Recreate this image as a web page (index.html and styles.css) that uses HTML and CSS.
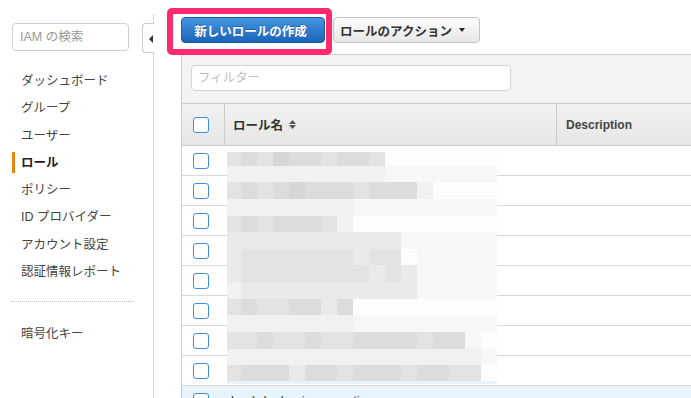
FILE: index.html
```
<!DOCTYPE html>
<html lang="ja">
<head>
<meta charset="utf-8">
<title>IAM ロール</title>
<link rel="stylesheet" href="styles.css">
</head>
<body>
<div class="app">
  <aside class="sidebar">
    <div class="search">IAM の検索</div>
    <nav class="nav">
      <a class="item">ダッシュボード</a>
      <a class="item">グループ</a>
      <a class="item">ユーザー</a>
      <a class="item active">ロール</a>
      <a class="item">ポリシー</a>
      <a class="item">ID プロバイダー</a>
      <a class="item">アカウント設定</a>
      <a class="item">認証情報レポート</a>
    </nav>
    <div class="sep"></div>
    <nav class="nav nav2">
      <a class="item">暗号化キー</a>
    </nav>
    <div class="collapse"></div>
  </aside>
  <main class="main">
    <div class="toolbar">
      <button class="btn primary">新しいロールの作成</button>
      <button class="btn secondary"><span>ロールのアクション</span><span class="caret"></span></button>
      <div class="highlight"></div>
    </div>
    <div class="panel">
      <div class="filterbar"><div class="filter">フィルター</div></div>
      <div class="head">
        <div class="c-cb hb"><span class="cb"></span></div>
        <div class="c-name hb">ロール名
          <svg class="sort" width="7" height="9" viewBox="0 0 7 9"><path d="M0 4 L3.5 0 L7 4 Z M0 5 L7 5 L3.5 9 Z" fill="#555"/></svg>
        </div>
        <div class="c-desc hd">Description</div>
      </div>
      <div class="row"><div class="c-cb"><span class="cb"></span></div><div class="c-name"></div><div class="c-desc"></div></div>
      <div class="row"><div class="c-cb"><span class="cb"></span></div><div class="c-name"></div><div class="c-desc"></div></div>
      <div class="row"><div class="c-cb"><span class="cb"></span></div><div class="c-name"></div><div class="c-desc"></div></div>
      <div class="row"><div class="c-cb"><span class="cb"></span></div><div class="c-name"></div><div class="c-desc"></div></div>
      <div class="row"><div class="c-cb"><span class="cb"></span></div><div class="c-name"></div><div class="c-desc"></div></div>
      <div class="row"><div class="c-cb"><span class="cb"></span></div><div class="c-name"></div><div class="c-desc"></div></div>
      <div class="row"><div class="c-cb"><span class="cb"></span></div><div class="c-name"></div><div class="c-desc"></div></div>
      <div class="row"><div class="c-cb"><span class="cb"></span></div><div class="c-name"></div><div class="c-desc"></div></div>
      <div class="row sel"><div class="c-cb"><span class="cb"></span></div><div class="c-name name-text">lambda_basic_execution</div><div class="c-desc"></div></div>
      <div class="blur" id="blur"></div>
    </div>
  </main>
</div>
<script src="script.js"></script>
</body>
</html>
```
FILE: styles.css
```
* { box-sizing: border-box; }
html, body { margin: 0; height: 100%; overflow: hidden; background: #fff; }
body {
  font-family: "Liberation Sans", "Noto Sans CJK JP", sans-serif;
  font-size: 12.5px;
  color: #333;
}
.app { display: flex; height: 398px; }

.sidebar {
  width: 154px;
  flex: none;
  margin-top: 14px;
  padding-top: 9px;
  border-right: 1px solid #d5d5d5;
  position: relative;
}
.search {
  margin-left: 12px;
  width: 117px;
  height: 28px;
  border: 1px solid #cfcfcf;
  border-radius: 4px;
  padding-left: 7px;
  line-height: 26px;
  color: #9a9a9a;
}
.nav { margin-top: 17px; }
.nav2 { margin-top: 19px; }
.item {
  display: block;
  height: 27.3px;
  line-height: 27.3px;
  padding-left: 21px;
  color: #444;
  position: relative;
}
.item.active { font-weight: bold; color: #222; }
.item.active::before {
  content: "";
  position: absolute;
  left: 12px;
  top: 2px;
  bottom: 4px;
  width: 3px;
  background: #e8850e;
}
.sep {
  margin: 14.5px 0 0 12px;
  width: 121px;
  border-top: 1px dotted #bdbdbd;
}
.collapse {
  position: absolute;
  right: -1px;
  top: 9px;
  width: 12px;
  height: 30px;
  border: 1px solid #ccc;
  border-right: none;
  border-radius: 4px 0 0 4px;
  background: #fff;
}
.collapse::after {
  content: "";
  position: absolute;
  left: 6px;
  top: 11px;
  border-right: 4px solid #333;
  border-top: 4px solid transparent;
  border-bottom: 4px solid transparent;
}

.main {
  flex: 1;
  min-width: 0;
  padding-left: 27px;
  display: flex;
  flex-direction: column;
}
.toolbar {
  height: 54px;
  flex: none;
  padding-top: 17px;
  display: flex;
  align-items: flex-start;
  gap: 8px;
  position: relative;
  z-index: 2;
}
.btn {
  height: 26px;
  border-radius: 4px;
  font-family: "Liberation Sans", "Noto Sans CJK JP", sans-serif;
  font-weight: bold;
  font-size: 12.5px;
  padding: 0;
  margin: 0;
}
.primary {
  width: 144px;
  padding-right: 5px;
  color: #fff;
  border: 1px solid #1a5aa8;
  background: linear-gradient(#4596e0, #1b63b8);
  text-shadow: 0 -1px 0 rgba(0,0,0,0.25);
}
.secondary {
  width: 147px;
  color: #333;
  border: 1px solid #c4c4c4;
  background: linear-gradient(#fefefe, #e7e7e7);
  display: flex;
  align-items: center;
  padding-left: 6px;
  gap: 7px;
}
.caret {
  width: 0;
  height: 0;
  border-left: 3px solid transparent;
  border-right: 3px solid transparent;
  border-top: 4px solid #222;
}
.highlight {
  position: absolute;
  left: -14px;
  top: 8px;
  width: 165px;
  height: 47px;
  border: 6px solid #fc2b6f;
  border-radius: 5px;
  pointer-events: none;
}

.panel {
  flex: 1;
  border-left: 1px solid #cccccc;
  border-top: 1px solid #cccccc;
  position: relative;
}
.filterbar {
  background: #f3f3f3;
  padding: 10px 0 12px 9px;
}
.filter {
  width: 320px;
  height: 26px;
  border: 1px solid #d3d3d3;
  border-radius: 4px;
  background: #fff;
  color: #c0c0c0;
  padding-left: 6px;
  line-height: 24px;
}
.head {
  display: flex;
  height: 43px;
  border-top: 1px solid #cccccc;
  border-bottom: 1px solid #cccccc;
  background: linear-gradient(#f2f2f2, #e6e6e6);
}
.c-cb {
  width: 43px;
  flex: none;
  padding-left: 11px;
  display: flex;
  align-items: center;
}
.c-name {
  width: 332px;
  flex: none;
  display: flex;
  align-items: center;
  padding-left: 8px;
}
.c-desc {
  flex: 1;
  display: flex;
  align-items: center;
  padding-left: 9px;
}
.head .c-cb, .head .c-name { border-right: 1px solid #cccccc; }
.hb { font-weight: bold; color: #333; }
.hd { font-weight: bold; font-size: 12px; color: #444; }
.sort { margin-left: 6px; }
.cb {
  width: 16px;
  height: 16px;
  border: 1.5px solid #3d8ee0;
  border-radius: 3px;
  background: #fff;
}
.row {
  display: flex;
  height: 30px;
  border-bottom: 1px solid #d8d8d8;
  background: #fff;
}
.row.sel { background: #e7f3fd; }
.name-text { padding-left: 6px; font-size: 13px; color: #333; }

.blur {
  position: absolute;
  left: 45px;
  top: 97px;
  display: flex;
  flex-direction: column;
}
.blur-row { display: flex; }
.blur-cell { width: 16px; flex: none; }
.blur-cell:first-child { width: 14px; }
```
FILE: script.js
```
(function () {
  var rows = [
    [14, "45465545540000000"],
    [16, "22222222221111111"],
    [17, "45456555455520000"],
    [17, "22222222111111111"],
    [16, "45455542000000000"],
    [17, "33333333333111111"],
    [16, "34444444344011111"],
    [17, "34444444434311111"],
    [17, "23333333333311111"],
    [16, "45445535000000000"],
    [17, "22222222111111111"],
    [17, "44544544555545510"],
    [16, "22222222222222221"],
    [16, "45553554555455440"],
    [3,  "77777777777777777"]
  ];
  var pal = {
    "0": "#fdfdfd", "1": "#f7f7f7", "2": "#f1f1f1", "3": "#eaeaea",
    "4": "#e3e3e3", "5": "#dcdcdc", "6": "#d6d6d6", "7": "#e9f3fc"
  };
  var blur = document.getElementById("blur");
  rows.forEach(function (r) {
    var row = document.createElement("div");
    row.className = "blur-row";
    row.style.height = r[0] + "px";
    r[1].split("").forEach(function (ch) {
      var c = document.createElement("span");
      c.className = "blur-cell";
      c.style.background = pal[ch];
      row.appendChild(c);
    });
    blur.appendChild(row);
  });
})();
```
